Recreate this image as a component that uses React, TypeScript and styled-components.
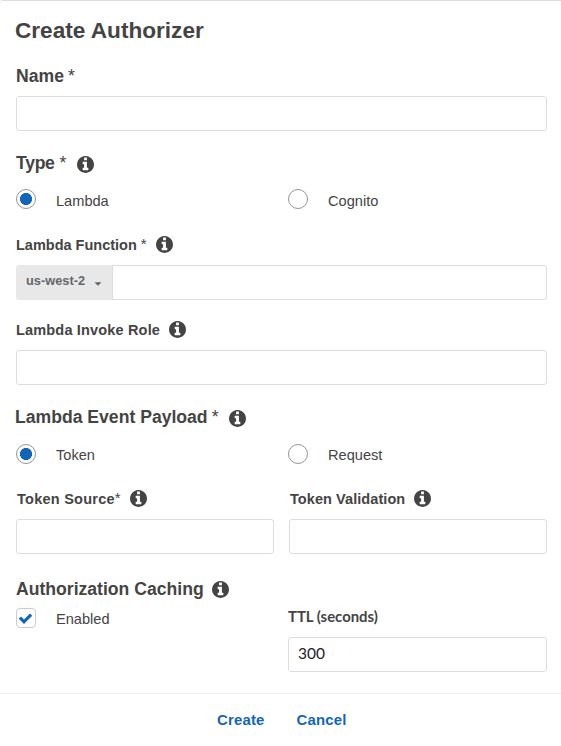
import React, { useState } from 'react';
import styled, { createGlobalStyle } from 'styled-components';
import { FaCaretDown } from 'react-icons/fa';

const GlobalStyle = createGlobalStyle`
  * { box-sizing: border-box; }
  body {
    margin: 0;
    background: #fff;
    color: #444;
    font-family: "Liberation Sans", Arial, sans-serif;
  }
`;

const Dialog = styled.form`
  width: 561px;
  height: 746px;
  display: flex;
  flex-direction: column;
  background: #fff;
  border-top: 1px solid #ddd;
  border-top-left-radius: 3px;
`;

const Body = styled.div`
  height: 692px;
  padding: 0 14px 0 16px;
`;

const Title = styled.h1`
  margin: 0 0 0 -1px;
  font-size: 22.6px;
  line-height: 60px;
  height: 60px;
  white-space: nowrap;
`;

const Heading = styled.div<{ $top?: number; $small?: boolean; $indent?: number; $spacing?: number }>`
  display: flex;
  align-items: center;
  height: 30px;
  margin-top: ${p => p.$top ?? 0}px;
  margin-left: ${p => p.$indent ?? 0}px;
  font-size: ${p => (p.$small ? 14.5 : 17.6)}px;
  letter-spacing: ${p => p.$spacing ?? 0}px;
  font-weight: 700;
  white-space: nowrap;
`;

const Star = styled.span<{ $gap?: number; $small?: boolean }>`
  margin-left: ${p => p.$gap ?? 5}px;
  padding-bottom: ${p => (p.$small ? 3 : 0)}px;
  font-size: ${p => (p.$small ? 15 : 17.6)}px;
  letter-spacing: 0;
  font-weight: 400;
`;

const InfoIcon = styled.svg<{ $gap?: number; $drop?: number }>`
  width: 17px;
  height: 17px;
  flex: none;
  fill: currentColor;
  margin-left: ${p => p.$gap ?? 10}px;
  margin-top: ${p => p.$drop ?? 0}px;
`;

function Info(props: { $gap?: number; $drop?: number }) {
  return (
    <InfoIcon viewBox="128 128 1536 1536" {...props}>
      <path d="M1152 1376v-160q0-14-9-23t-23-9h-96v-512q0-14-9-23t-23-9h-320q-14 0-23 9t-9 23v160q0 14 9 23t23 9h96v320h-96q-14 0-23 9t-9 23v160q0 14 9 23t23 9h448q14 0 23-9t9-23zm-128-896v-192q0-14-9-23t-23-9h-192q-14 0-23 9t-9 23v192q0 14 9 23t23 9h192q14 0 23-9t9-23zm640 416q0 209-103 385.5t-279.5 279.5-385.5 103-385.5-103-279.5-279.5-103-385.5 103-385.5 279.5-279.5 385.5-103 385.5 103 279.5 279.5 103 385.5z" />
    </InfoIcon>
  );
}

const Input = styled.input`
  display: block;
  width: 100%;
  height: 35px;
  margin-top: 5px;
  padding: 0 9px 3px;
  border: 1px solid #ddd;
  border-radius: 3px;
  background: #fff;
  color: #222;
  font: 15.5px Lato, sans-serif;
  outline: none;
`;

const InputGroup = styled.div`
  display: flex;
  margin-top: 5px;

  ${Input} {
    margin-top: 0;
    flex: 1;
    border-radius: 0 3px 3px 0;
  }
`;

const Region = styled.button`
  display: flex;
  align-items: center;
  width: 96px;
  height: 35px;
  padding: 0 10px 4px;
  border: 0;
  border-radius: 3px 0 0 3px;
  background: #e8e8e8;
  color: #666;
  font: 700 12.8px "Liberation Sans", Arial, sans-serif;
  white-space: nowrap;

  svg {
    width: 11px;
    height: 11px;
    margin: 5px 0 0 9px;
  }
`;

const Choices = styled.div<{ $top?: number }>`
  display: grid;
  grid-template-columns: 272px 1fr;
  align-items: center;
  height: 42px;
  margin-top: ${p => p.$top ?? 0}px;
`;

const Option = styled.label<{ $drop?: number }>`
  display: flex;
  align-items: center;
  height: 20px;
  font-size: 14.6px;

  span {
    margin: ${p => p.$drop ?? 1}px 0 0 20px;
  }
`;

const Radio = styled.input`
  appearance: none;
  width: 20px;
  height: 20px;
  margin: 0;
  border: 1px solid #949494;
  border-radius: 50%;

  &:checked {
    background: radial-gradient(circle, #1166bb 5.7px, #fff 6.3px) no-repeat;
  }
`;

const CheckBox = styled.button`
  display: grid;
  place-items: center;
  width: 20px;
  height: 20px;
  padding: 0;
  border: 1px solid #ccc;
  border-radius: 4px;
  background: #fff;
  color: #1166bb;

  svg {
    width: 15px;
    height: 15px;
    margin-right: 1px;
    fill: currentColor;
  }
`;

const Columns = styled.div`
  display: grid;
  grid-template-columns: 258px 258px;
  column-gap: 15px;
  margin-top: 9px;
`;

const Caching = styled.div`
  display: grid;
  grid-template-columns: 272px 259px;

  ${Option} {
    margin-top: 4px;
  }
`;

const TtlLabel = styled.label`
  display: block;
  height: 28px;
  font: 700 14.9px/24px Lato, sans-serif;
`;

const Footer = styled.footer`
  display: flex;
  align-items: center;
  gap: 32px;
  height: 53px;
  padding-left: 217px;
  border-top: 1px solid #eee;
`;

const Action = styled.button`
  padding: 0;
  border: 0;
  background: none;
  color: #1166bb;
  font: 700 14.9px "Liberation Sans", Arial, sans-serif;
  letter-spacing: 0.2px;
`;

interface ChoiceProps {
  name: string;
  options: string[];
  top?: number;
  drop?: number;
}

function Choice({ name, options, top, drop }: ChoiceProps) {
  return (
    <Choices $top={top}>
      {options.map((option, index) => (
        <Option key={option} $drop={drop}>
          <Radio type="radio" name={name} defaultChecked={index === 0} />
          <span>{option}</span>
        </Option>
      ))}
    </Choices>
  );
}

export default function App() {
  const [cached, setCached] = useState(true);

  return (
    <>
      <GlobalStyle />
      <Dialog onSubmit={e => e.preventDefault()}>
        <Body>
          <Title>Create Authorizer</Title>
          <Heading>Name<Star $gap={4}>*</Star></Heading>
          <Input aria-label="Name" />

          <Heading $top={17} $spacing={-0.3}>Type<Star>*</Star><Info $gap={11} $drop={2} /></Heading>
          <Choice name="type" options={['Lambda', 'Cognito']} drop={3} />

          <Heading $small $top={10}>Lambda Function<Star $small $gap={4}>*</Star><Info $gap={9} $drop={-1} /></Heading>
          <InputGroup>
            <Region type="button">us-west-2<FaCaretDown /></Region>
            <Input aria-label="Lambda Function" />
          </InputGroup>

          <Heading $small $top={15} $spacing={0.17}>Lambda Invoke Role<Info $gap={9} $drop={-1} /></Heading>
          <Input aria-label="Lambda Invoke Role" />

          <Heading $top={17} $indent={-1}>Lambda Event Payload<Star $gap={4}>*</Star><Info $gap={11} $drop={2} /></Heading>
          <Choice name="payload" options={['Token', 'Request']} top={1} />

          <Columns>
            <div>
              <Heading $small $indent={1} $spacing={0.25}>Token Source<Star $small $gap={0}>*</Star><Info $gap={9} $drop={-1} /></Heading>
              <Input aria-label="Token Source" />
            </div>
            <div>
              <Heading $small $indent={1} $spacing={0.07}>Token Validation<Info $gap={9} $drop={-1} /></Heading>
              <Input aria-label="Token Validation" />
            </div>
          </Columns>

          <Heading $top={20}>Authorization Caching<Info $gap={8} $drop={1} /></Heading>
          <Caching>
            <Option>
              <CheckBox type="button" role="checkbox" aria-checked={cached} onClick={() => setCached(!cached)}>
                {cached && (
                  <svg viewBox="0 0 1792 1792">
                    <path d="M1671 566q0 40-28 68l-724 724-136 136q-28 28-68 28t-68-28l-136-136-362-362q-28-28-28-68t28-68l136-136q28-28 68-28t68 28l294 295 656-657q28-28 68-28t68 28l136 136q28 28 28 68z" />
                  </svg>
                )}
              </CheckBox>
              <span>Enabled</span>
            </Option>
            <div>
              <TtlLabel htmlFor="ttl">TTL (seconds)</TtlLabel>
              <Input id="ttl" defaultValue="300" />
            </div>
          </Caching>
        </Body>
        <Footer>
          <Action type="submit">Create</Action>
          <Action type="button">Cancel</Action>
        </Footer>
      </Dialog>
    </>
  );
}
